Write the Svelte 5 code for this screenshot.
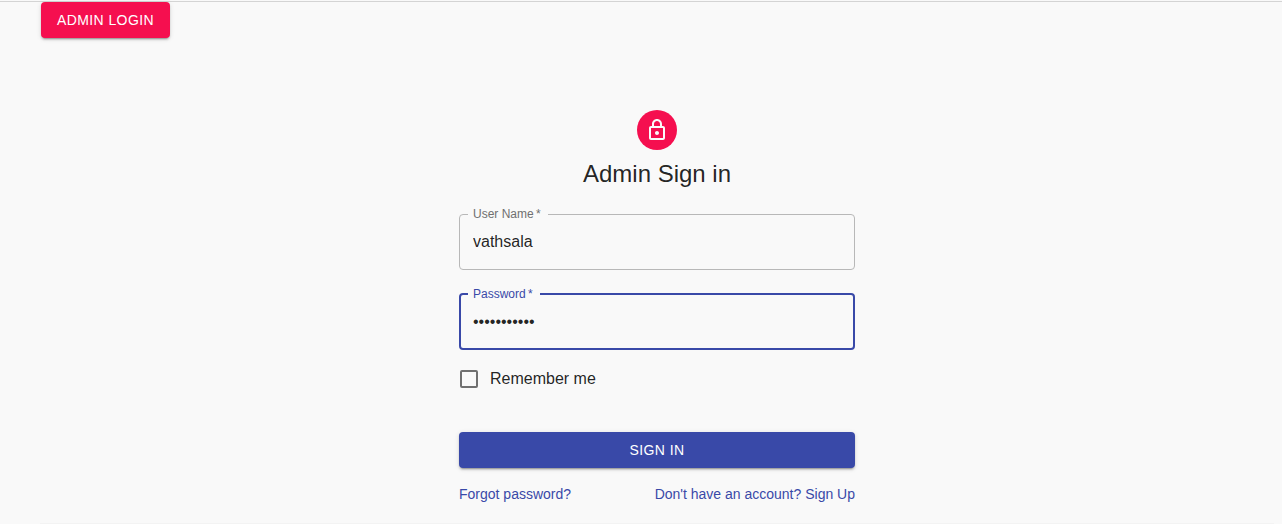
<script>
  let username = $state('vathsala');
  let password = $state('passwordabc');
  let remember = $state(false);
</script>

<div class="page">
  <header>
    <button class="btn pink" type="button">Admin Login</button>
  </header>
  <main>
    <div class="avatar">
      <svg viewBox="0 0 24 24" width="24" height="24" aria-hidden="true">
        <path fill="currentColor" fill-rule="evenodd" d="M18 8h-1V6c0-2.760-2.240-5-5-5S7 3.240 7 6v2H6c-1.100 0-2 .9-2 2v10c0 1.100.9 2 2 2h12c1.100 0 2-.9 2-2V10c0-1.100-.9-2-2-2zM9 6c0-1.660 1.340-3 3-3s3 1.340 3 3v2H9V6zm9 14H6V10h12v10zm-6-3c1.100 0 2-.9 2-2s-.9-2-2-2-2 .9-2 2 .9 2 2 2z" />
      </svg>
    </div>
    <h1>Admin Sign in</h1>
    <form onsubmit={(e) => e.preventDefault()}>
      <fieldset class="field">
        <legend><label for="username">User Name&#8201;*</label></legend>
        <input id="username" type="text" bind:value={username} />
      </fieldset>
      <fieldset class="field active">
        <legend><label for="password">Password&#8201;*</label></legend>
        <input id="password" type="password" bind:value={password} />
      </fieldset>
      <label class="remember">
        <input type="checkbox" bind:checked={remember} />
        <span>Remember me</span>
      </label>
      <button class="btn blue" type="submit">Sign In</button>
      <div class="links">
        <a href="#forgot">Forgot password?</a>
        <a href="#signup">Don't have an account? Sign Up</a>
      </div>
    </form>
  </main>
  <hr />
</div>

<style>
  :global(body) {
    background: #f9f9f9;
    color: rgba(0, 0, 0, 0.87);
    font-family: "Liberation Sans", Arial, sans-serif;
  }
  .page {
    display: flex;
    flex-direction: column;
    box-sizing: border-box;
    min-height: 100vh;
    padding-top: 1px;
  }
  header {
    display: flex;
    padding: 0 41px;
    border-top: 1px solid #d4d4d4;
  }
  .btn {
    height: 36px;
    padding: 0 16px;
    border: 0;
    border-radius: 4px;
    color: #fff;
    font: 14px/24px "Liberation Sans", Arial, sans-serif;
    letter-spacing: 0.02857em;
    text-transform: uppercase;
    cursor: pointer;
    box-shadow: 0 3px 1px -2px rgba(0, 0, 0, 0.2), 0 2px 2px rgba(0, 0, 0, 0.14), 0 1px 5px rgba(0, 0, 0, 0.12);
  }
  .pink {
    background: #f50f4f;
  }
  .blue {
    width: 100%;
    margin-top: 32px;
    background: #3949a8;
  }
  main {
    display: flex;
    flex-direction: column;
    align-items: center;
    align-self: center;
    box-sizing: content-box;
    width: 100%;
    max-width: 396px;
    margin-top: 72px;
    padding-left: 32px;
  }
  .avatar {
    display: grid;
    place-items: center;
    width: 40px;
    height: 40px;
    border-radius: 50%;
    background: #f50f4f;
    color: #fafafa;
  }
  h1 {
    margin: 8px 0 0;
    font-size: 24px;
    line-height: 32px;
    font-weight: 400;
  }
  form {
    width: 100%;
    margin-top: 16px;
  }
  .field {
    box-sizing: border-box;
    height: 64px;
    min-width: 0;
    margin: 0 0 16px;
    padding: 0 13px;
    border: 1px solid #b8b8b8;
    border-radius: 4px;
  }
  legend {
    margin-left: -5px;
    padding: 0 7px 0 5px;
    color: #707070;
    font-size: 12px;
    line-height: 16px;
  }
  .field input {
    display: block;
    box-sizing: border-box;
    width: 100%;
    height: 40px;
    padding: 0;
    border: 0;
    outline: 0;
    background: none;
    color: inherit;
    font: 16px/24px "Liberation Sans", Arial, sans-serif;
  }
  .field.active {
    margin-bottom: 8px;
    padding: 0 12px;
    border: 2px solid #3949a8;
  }
  .active legend {
    color: #3949a8;
  }
  .remember {
    display: flex;
    align-items: center;
    gap: 12px;
    height: 42px;
    padding-left: 1px;
    font-size: 16px;
  }
  .remember input {
    appearance: none;
    box-sizing: border-box;
    width: 18px;
    height: 18px;
    margin: 0;
    border: 2px solid #707070;
    border-radius: 2px;
  }
  .remember input:checked {
    background: #3949a8;
  }
  .links {
    display: flex;
    justify-content: space-between;
    margin-top: 16px;
    font-size: 14px;
    line-height: 20px;
  }
  a {
    color: #3949a8;
    text-decoration: none;
  }
  hr {
    align-self: stretch;
    height: 1px;
    margin: auto 8px 0 40px;
    border: 0;
    background: #f3f3f3;
  }
</style>
